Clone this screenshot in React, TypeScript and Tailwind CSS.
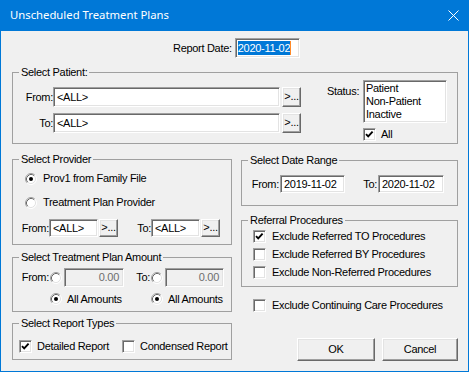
import type { ReactNode } from 'react';

const sunken =
  'border border-t-[#a0a0a0] border-l-[#a0a0a0] border-r-white border-b-white shadow-[inset_1px_1px_0_#696969,inset_-1px_-1px_0_#e3e3e3]';
const raised =
  'border border-t-white border-l-white border-r-[#696969] border-b-[#696969] shadow-[inset_-1px_-1px_0_#a0a0a0,inset_1px_1px_0_#e3e3e3] bg-[#f0f0f0]';

function Group({ title, className, children }: { title: string; className: string; children: ReactNode }) {
  return (
    <fieldset className={`border border-[#a0a0a0] ${className}`}>
      <legend className="ml-[6px] px-[2px] leading-[13px]">{title}</legend>
      {children}
    </fieldset>
  );
}

function TextBox({ value, className }: { value: string; className: string }) {
  return (
    <div className={`flex items-center bg-white pl-[3px] ${sunken} ${className}`}>
      <span className="leading-[13px] whitespace-nowrap">{value}</span>
    </div>
  );
}

function Browse({ className }: { className: string }) {
  return (
    <div className={`flex items-center justify-center leading-[13px] ${raised} ${className}`}>
      <span className="-mt-[1px]">&gt;...</span>
    </div>
  );
}

function Radio({ checked }: { checked?: boolean }) {
  return (
    <svg width="12" height="12" viewBox="0 0 12 12" className="shrink-0">
      <circle cx="6" cy="6" r="5" fill="#fff" />
      <path d="M2.11 9.89 A5.5 5.5 0 0 1 9.89 2.11" fill="none" stroke="#a0a0a0" />
      <path d="M9.89 2.11 A5.5 5.5 0 0 1 2.11 9.89" fill="none" stroke="#ffffff" />
      <path d="M2.82 9.18 A4.5 4.5 0 0 1 9.18 2.82" fill="none" stroke="#696969" />
      <path d="M9.18 2.82 A4.5 4.5 0 0 1 2.82 9.18" fill="none" stroke="#e3e3e3" />
      {checked && <circle cx="6" cy="6" r="2" fill="#000" />}
    </svg>
  );
}

function Check({ checked }: { checked?: boolean }) {
  return (
    <div className={`h-[13px] w-[13px] shrink-0 bg-white ${sunken}`}>
      {checked && (
        <svg width="11" height="11" viewBox="0 0 11 11">
          <path d="M2 5.2 L4.2 7.4 L8.6 2.6" fill="none" stroke="#000" strokeWidth="1.9" />
        </svg>
      )}
    </div>
  );
}

function CheckRow({ label, checked, className }: { label: string; checked?: boolean; className: string }) {
  return (
    <div className={`flex h-[13px] items-center ${className}`}>
      <Check checked={checked} />
      <span className="ml-[6px] leading-[13px] whitespace-nowrap">{label}</span>
    </div>
  );
}

export default function App() {
  return (
    <div className="h-[372px] w-[469px] overflow-hidden border border-t-0 border-[#0078d7] bg-[#f0f0f0] font-['Liberation_Sans',Arial,sans-serif] text-[11px] tracking-[-0.3px] whitespace-nowrap text-black">
      {/* title bar */}
      <div className="flex h-[31px] items-center justify-between bg-[#0078d7] pl-[9px] pr-[9px] tracking-normal text-white">
        <span className="font-['Noto_Sans',sans-serif] text-[11.3px]">Unscheduled Treatment Plans</span>
        <svg width="11" height="11" viewBox="0 0 11 11">
          <path d="M0.5 0.5 L10.5 10.5 M10.5 0.5 L0.5 10.5" stroke="#fff" strokeWidth="1" />
        </svg>
      </div>

      <div className="pl-[11px] pr-[10px]">
        <div className="mt-[7px] flex h-[20px] items-center pl-[161px]">
          <span className="leading-[13px]">Report Date:</span>
          <div className={`ml-[3px] flex h-[20px] w-[65px] items-center bg-white pl-[2px] ${sunken}`}>
            <span className="bg-[#0078d7] leading-[14px] text-white">2020-11-02</span>
            <span className="h-[14px] w-[1px] bg-[#ff8a28]" />
          </div>
        </div>

        {/* patient */}
        <Group title="Select Patient:" className="mt-[8px] h-[78px]">
          <div className="flex items-start">
            <div className="mt-[8px]">
              <div className="flex h-[20px] items-center">
                <span className="w-[40px] text-right leading-[13px]">From:</span>
                <TextBox value="<ALL>" className="h-[20px] w-[227px]" />
                <Browse className="ml-[2px] h-[20px] w-[19px]" />
              </div>
              <div className="mt-[6px] flex h-[20px] items-center">
                <span className="w-[40px] text-right leading-[13px]">To:</span>
                <TextBox value="<ALL>" className="h-[20px] w-[227px]" />
                <Browse className="ml-[2px] h-[20px] w-[19px]" />
              </div>
            </div>
            <span className="ml-[26px] mt-[6px] w-[36px] leading-[13px]">Status:</span>
            <div className="mt-[1px] flex flex-col">
              <div className={`h-[43px] w-[84px] bg-white pl-[2px] pt-[1px] ${sunken}`}>
                <div className="leading-[13px]">Patient</div>
                <div className="leading-[13px]">Non-Patient</div>
                <div className="leading-[13px]">Inactive</div>
              </div>
              <div className="mt-[5px] flex h-[13px] items-center">
                <Check checked />
                <span className="ml-[5px] leading-[13px]">All</span>
              </div>
            </div>
          </div>
        </Group>

        <div className="mt-[9px] flex gap-[9px]">
          {/* left column */}
          <div className="flex w-[220px] flex-col">
            <Group title="Select Provider" className="h-[92px]">
              <div className="mt-[6px] flex h-[13px] items-center pl-[12px]">
                <Radio checked />
                <span className="ml-[6px] leading-[13px]">Prov1 from Family File</span>
              </div>
              <div className="mt-[11px] flex h-[13px] items-center pl-[12px]">
                <Radio />
                <span className="ml-[6px] leading-[13px]">Treatment Plan Provider</span>
              </div>
              <div className="mt-[10px] flex h-[18px] items-center">
                <span className="w-[36px] text-right leading-[13px]">From:</span>
                <TextBox value="<ALL>" className="h-[18px] w-[49px]" />
                <Browse className="ml-[1px] h-[18px] w-[19px]" />
                <span className="w-[33px] text-right leading-[13px]">To:</span>
                <TextBox value="<ALL>" className="h-[18px] w-[49px]" />
                <Browse className="ml-[1px] h-[18px] w-[19px]" />
              </div>
            </Group>

            <Group title="Select Treatment Plan Amount" className="mt-[6px] h-[61px]">
              <div className="mt-[4px] flex h-[19px] items-center">
                <span className="w-[37px] pr-[1px] text-right leading-[13px]">From:</span>
                <Radio />
                <div className={`ml-[2px] flex h-[19px] w-[60px] items-center justify-end pr-[4px] text-[#6d6d6d] ${sunken}`}>
                  0.00
                </div>
                <span className="w-[27px] pr-[1px] text-right leading-[13px]">To:</span>
                <Radio />
                <div className={`ml-[2px] flex h-[19px] w-[59px] items-center justify-end pr-[4px] text-[#6d6d6d] ${sunken}`}>
                  0.00
                </div>
              </div>
              <div className="mt-[6px] flex h-[12px] items-center pl-[37px]">
                <div className="flex w-[101px] items-center">
                  <Radio checked />
                  <span className="ml-[5px] leading-[13px]">All Amounts</span>
                </div>
                <Radio checked />
                <span className="ml-[5px] leading-[13px]">All Amounts</span>
              </div>
            </Group>

            <Group title="Select Report Types" className="mt-[5px] h-[43px]">
              <div className="mt-[10px] flex h-[13px] items-center pl-[6px]">
                <div className="flex w-[103px] items-center">
                  <Check checked />
                  <span className="ml-[5px] leading-[13px]">Detailed Report</span>
                </div>
                <Check />
                <span className="ml-[5px] leading-[13px]">Condensed Report</span>
              </div>
            </Group>
          </div>

          {/* right column */}
          <div className="flex w-[217px] flex-col">
            <Group title="Select Date Range" className="mt-[1px] h-[52px]">
              <div className="mt-[8px] flex h-[18px] items-center">
                <span className="w-[38px] pr-[1px] text-right leading-[13px]">From:</span>
                <TextBox value="2019-11-02" className="h-[18px] w-[65px]" />
                <span className="w-[33px] pr-[1px] text-right leading-[13px]">To:</span>
                <TextBox value="2020-11-02" className="h-[18px] w-[66px]" />
              </div>
            </Group>

            <Group title="Referral Procedures" className="mt-[8px] h-[73px]">
              <CheckRow label="Exclude Referred TO Procedures" checked className="mt-[3px] pl-[11px]" />
              <CheckRow label="Exclude Referred BY Procedures" className="mt-[5px] pl-[11px]" />
              <CheckRow label="Exclude Non-Referred Procedures" className="mt-[5px] pl-[11px]" />
            </Group>

            <CheckRow label="Exclude Continuing Care Procedures" className="mt-[12px] pl-[12px]" />

            <div className="mt-[26px] flex justify-end gap-[7px]">
              <div className={`flex h-[23px] w-[78px] items-center justify-center ${raised}`}>OK</div>
              <div className={`flex h-[23px] w-[76px] items-center justify-center ${raised}`}>Cancel</div>
            </div>
          </div>
        </div>
      </div>
    </div>
  );
}
